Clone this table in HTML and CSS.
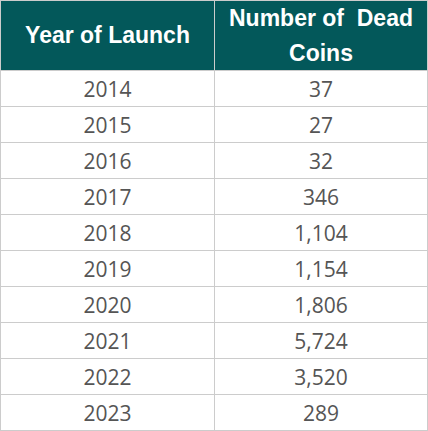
FILE: index.html
```html
<!DOCTYPE html>
<html>
<head>
<meta charset="utf-8">
<link rel="stylesheet" href="styles.css">
</head>
<body>
<table class="coins">
  <thead>
    <tr><th>Year of Launch</th><th>Number of&nbsp; Dead Coins</th></tr>
  </thead>
  <tbody>
    <tr><td>2014</td><td>37</td></tr>
    <tr><td>2015</td><td>27</td></tr>
    <tr><td>2016</td><td>32</td></tr>
    <tr><td>2017</td><td>346</td></tr>
    <tr><td>2018</td><td>1,104</td></tr>
    <tr><td>2019</td><td>1,154</td></tr>
    <tr><td>2020</td><td>1,806</td></tr>
    <tr><td>2021</td><td>5,724</td></tr>
    <tr><td>2022</td><td>3,520</td></tr>
    <tr><td>2023</td><td>289</td></tr>
  </tbody>
</table>
</body>
</html>
```
FILE: styles.css
```css
html, body {
  margin: 0;
  padding: 0;
  background: #fff;
}
.coins {
  border-collapse: collapse;
  width: 428px;
  table-layout: fixed;
}
.coins th, .coins td {
  border: 1px solid #cccccc;
  text-align: center;
  padding: 0;
}
.coins th {
  background: #03585a;
  color: #ffffff;
  font-family: "Liberation Sans", Arial, sans-serif;
  font-weight: bold;
  font-size: 23px;
  line-height: 34.5px;
  height: 69px;
}
.coins th:first-child, .coins td:first-child {
  width: 213px;
}
.coins td {
  font-family: "Open Sans", sans-serif;
  font-size: 21px;
  color: #555555;
  height: 33px;
  padding-top: 2px;
  line-height: 33px;
}
```
